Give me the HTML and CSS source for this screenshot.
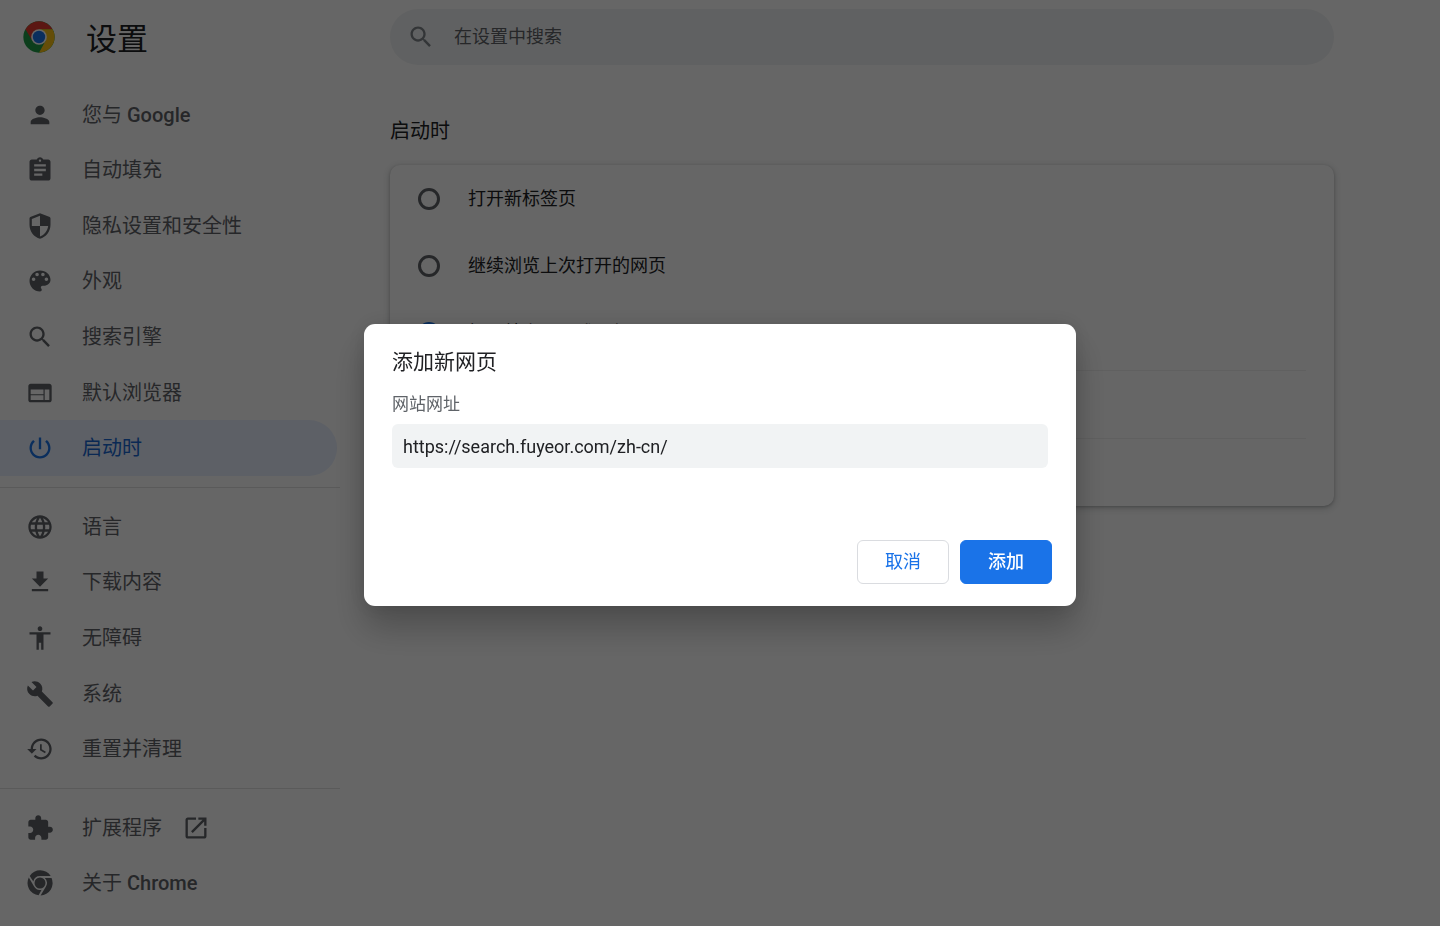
FILE: index.html
```html
<!DOCTYPE html>
<html lang="zh-CN">
<head>
<meta charset="utf-8">
<meta name="viewport" content="width=device-width, initial-scale=1">
<title>设置</title>
<link rel="stylesheet" href="styles.css">
</head>
<body>
<div class="page">
  <aside class="sidebar">
    <header class="brand">
      <svg class="brand-logo" viewBox="0 0 48 48" aria-hidden="true">
        <circle cx="24" cy="24" r="23.5" fill="#1e9b48"/>
        <path fill="#e33b2e" d="M3.65 12.25A23.5 23.5 0 0 1 44.35 12.25H24L14.04 29.75z"/>
        <path fill="#fbc116" d="M44.35 12.25A23.5 23.5 0 0 1 24 47.5L33.96 29.75 24 12.25z"/>
        <circle cx="24" cy="24" r="11.75" fill="#fff"/>
        <circle cx="24" cy="24" r="9.3" fill="#1a73e8"/>
      </svg>
      <h1 class="brand-title">设置</h1>
    </header>
    <nav class="menu">
      <div class="menu-group menu-group-primary">
        <a class="menu-item" href="#people"><svg class="icon" viewBox="0 0 24 24"><path d="M12 12c2.21 0 4-1.79 4-4s-1.79-4-4-4-4 1.79-4 4 1.79 4 4 4zm0 2c-2.67 0-8 1.34-8 4v2h16v-2c0-2.66-5.33-4-8-4z"/></svg><span>您与 <span class="latin">Google</span></span></a>
        <a class="menu-item" href="#autofill"><svg class="icon" viewBox="0 0 24 24"><path d="M19 3h-4.18C14.4 1.84 13.3 1 12 1c-1.3 0-2.4.84-2.82 2H5c-1.1 0-2 .9-2 2v14c0 1.1.9 2 2 2h14c1.1 0 2-.9 2-2V5c0-1.1-.9-2-2-2zm-7 0c.55 0 1 .45 1 1s-.45 1-1 1-1-.45-1-1 .45-1 1-1zm2 14H7v-2h7v2zm3-4H7v-2h10v2zm0-4H7V7h10v2z"/></svg><span>自动填充</span></a>
        <a class="menu-item" href="#privacy"><svg class="icon" viewBox="0 0 24 24"><path d="M12 1L4.2 4C3.4 4.3 3 4.8 3 5.6V11c0 5.55 3.84 10.74 9 12 5.16-1.26 9-6.45 9-12V5.6c0-.8-.4-1.3-1.2-1.6L12 1zm0 10.99h7c-.53 4.12-3.28 7.79-7 8.94V12H5V5.9l7-2.71v8.8z"/></svg><span>隐私设置和安全性</span></a>
        <a class="menu-item" href="#appearance"><svg class="icon" viewBox="0 0 24 24"><path d="M12 3c-4.97 0-9 4.03-9 9s4.03 9 9 9c.83 0 1.5-.67 1.5-1.5 0-.39-.15-.74-.39-1.01-.23-.26-.38-.61-.38-.99 0-.83.67-1.5 1.5-1.5H16c2.76 0 5-2.24 5-5 0-4.42-4.03-8-9-8zm-5.5 9c-.83 0-1.5-.67-1.5-1.5S5.67 9 6.5 9 8 9.67 8 10.5 7.33 12 6.5 12zm3-4C8.67 8 8 7.33 8 6.5S8.67 5 9.5 5s1.5.67 1.5 1.5S10.33 8 9.5 8zm5 0c-.83 0-1.5-.67-1.5-1.5S13.67 5 14.5 5s1.5.67 1.5 1.5S15.33 8 14.5 8zm3 4c-.83 0-1.5-.67-1.5-1.5S16.67 9 17.5 9s1.5.67 1.5 1.5-.67 1.5-1.5 1.5z"/></svg><span>外观</span></a>
        <a class="menu-item" href="#search"><svg class="icon" viewBox="0 0 24 24"><path d="M15.5 14h-.79l-.28-.27C15.41 12.59 16 11.11 16 9.5 16 5.91 13.09 3 9.5 3S3 5.91 3 9.5 5.91 16 9.5 16c1.61 0 3.09-.59 4.23-1.57l.27.28v.79l5 4.99L20.49 19l-4.99-5zm-6 0C7.01 14 5 11.99 5 9.5S7.01 5 9.5 5 14 7.01 14 9.5 11.99 14 9.5 14z"/></svg><span>搜索引擎</span></a>
        <a class="menu-item" href="#default-browser"><svg class="icon" viewBox="0 0 24 24"><path d="M20 4H4c-1.1 0-1.99.9-1.99 2L2 18c0 1.1.9 2 2 2h16c1.1 0 2-.9 2-2V6c0-1.1-.9-2-2-2zm-5 14H4v-4h11v4zm0-5H4V9h11v4zm5 5h-4V9h4v9z"/></svg><span>默认浏览器</span></a>
        <a class="menu-item menu-item-current" href="#on-startup" aria-current="page"><svg class="icon" viewBox="0 0 24 24"><path d="M13 3h-2v10h2V3zm4.83 2.17l-1.42 1.42C17.99 7.86 19 9.81 19 12c0 3.87-3.13 7-7 7s-7-3.13-7-7c0-2.19 1.01-4.14 2.58-5.42L6.17 5.17C4.23 6.82 3 9.26 3 12c0 4.97 4.03 9 9 9s9-4.03 9-9c0-2.74-1.23-5.18-3.17-6.83z"/></svg><span>启动时</span></a>
      </div>
      <hr class="menu-rule">
      <div class="menu-group menu-group-advanced">
        <a class="menu-item" href="#languages"><svg class="icon" viewBox="0 0 24 24"><path d="M11.99 2C6.47 2 2 6.48 2 12s4.47 10 9.99 10C17.52 22 22 17.52 22 12S17.52 2 11.99 2zm6.93 6h-2.95c-.32-1.25-.78-2.45-1.38-3.56 1.84.63 3.37 1.91 4.33 3.56zM12 4.04c.83 1.2 1.48 2.53 1.91 3.96h-3.82c.43-1.43 1.08-2.76 1.91-3.96zM4.26 14C4.1 13.36 4 12.69 4 12s.1-1.36.26-2h3.38c-.08.66-.14 1.32-.14 2s.06 1.34.14 2H4.26zm.82 2h2.95c.32 1.25.78 2.45 1.38 3.56-1.84-.63-3.37-1.9-4.33-3.56zm2.95-8H5.08c.96-1.66 2.49-2.93 4.33-3.56C8.81 5.55 8.35 6.75 8.03 8zM12 19.96c-.83-1.2-1.48-2.53-1.91-3.96h3.82c-.43 1.43-1.08 2.76-1.91 3.96zM14.34 14H9.66c-.09-.66-.16-1.32-.16-2s.07-1.35.16-2h4.68c.09.65.16 1.32.16 2s-.07 1.34-.16 2zm.25 5.56c.6-1.11 1.06-2.31 1.38-3.56h2.95c-.96 1.65-2.49 2.93-4.33 3.56zM16.36 14c.08-.66.14-1.32.14-2s-.06-1.34-.14-2h3.38c.16.64.26 1.31.26 2s-.1 1.36-.26 2h-3.38z"/></svg><span>语言</span></a>
        <a class="menu-item" href="#downloads"><svg class="icon" viewBox="0 0 24 24"><path d="M19 9h-4V3H9v6H5l7 7 7-7zM5 18v2h14v-2H5z"/></svg><span>下载内容</span></a>
        <a class="menu-item" href="#accessibility"><svg class="icon" viewBox="0 0 24 24"><path d="M12 2c1.1 0 2 .9 2 2s-.9 2-2 2-2-.9-2-2 .9-2 2-2zm9 7h-6v13h-2v-6h-2v6H9V9H3V7h18v2z"/></svg><span>无障碍</span></a>
        <a class="menu-item" href="#system"><svg class="icon" viewBox="0 0 24 24"><path d="M22.7 19l-9.1-9.1c.9-2.3.4-5-1.5-6.9-2-2-5-2.4-7.4-1.3L9 6 6 9 1.6 4.7C.4 7.1.9 10.1 2.9 12.1c1.9 1.9 4.6 2.4 6.9 1.5l9.1 9.1c.4.4 1 .4 1.4 0l2.3-2.3c.5-.4.5-1.1.1-1.4z"/></svg><span>系统</span></a>
        <a class="menu-item" href="#reset"><svg class="icon" viewBox="0 0 24 24"><path d="M13 3c-4.97 0-9 4.03-9 9H1l3.89 3.89.07.14L9 12H6c0-3.87 3.13-7 7-7s7 3.13 7 7-3.13 7-7 7c-1.93 0-3.68-.79-4.94-2.06l-1.42 1.42C8.27 19.99 10.51 21 13 21c4.97 0 9-4.03 9-9s-4.03-9-9-9zm-1 5v5l4.28 2.54.72-1.21-3.5-2.08V8H12z"/></svg><span>重置并清理</span></a>
      </div>
      <hr class="menu-rule">
      <div class="menu-group menu-group-about">
        <a class="menu-item" href="#extensions"><svg class="icon" viewBox="0 0 24 24"><path d="M20.5 11H19V7c0-1.1-.9-2-2-2h-4V3.5C13 2.12 11.88 1 10.5 1S8 2.12 8 3.5V5H4c-1.1 0-1.99.9-1.99 2v3.8H3.5c1.49 0 2.7 1.21 2.7 2.7s-1.21 2.7-2.7 2.7H2V20c0 1.1.9 2 2 2h3.8v-1.5c0-1.49 1.21-2.7 2.7-2.7 1.49 0 2.7 1.21 2.7 2.7V22H17c1.1 0 2-.9 2-2v-4h1.5c1.38 0 2.5-1.12 2.5-2.5S21.88 11 20.5 11z"/></svg><span>扩展程序</span><svg class="icon icon-external" viewBox="0 0 24 24"><path d="M19 19H5V5h7V3H5c-1.11 0-2 .9-2 2v14c0 1.1.89 2 2 2h14c1.1 0 2-.9 2-2v-7h-2v7zM14 3v2h3.59l-9.83 9.83 1.41 1.41L19 6.41V10h2V3h-7z"/></svg></a>
        <a class="menu-item" href="#about"><svg class="icon" viewBox="0 0 24 24"><circle cx="12" cy="12" r="4.7"/><path d="M12 6.1h9.2A10.7 10.7 0 0 0 3.2 5.9L6.3 10.8A5.9 5.9 0 0 1 12 6.1zM2.4 7.2A10.7 10.7 0 0 0 10.8 22.6L13.4 17.7A5.9 5.9 0 0 1 6.8 14.8zM21.9 7.7H16.1A5.9 5.9 0 0 1 17.1 14.9L12.5 22.7A10.7 10.7 0 0 0 21.9 7.7z"/></svg><span>关于 <span class="latin">Chrome</span></span></a>
      </div>
    </nav>
  </aside>

  <main class="content">
    <div class="search">
      <svg class="icon search-icon" viewBox="0 0 24 24" aria-hidden="true"><path d="M15.5 14h-.79l-.28-.27C15.41 12.59 16 11.11 16 9.5 16 5.91 13.09 3 9.5 3S3 5.91 3 9.5 5.91 16 9.5 16c1.61 0 3.09-.59 4.23-1.57l.27.28v.79l5 4.99L20.49 19l-4.99-5zm-6 0C7.01 14 5 11.99 5 9.5S7.01 5 9.5 5 14 7.01 14 9.5 11.99 14 9.5 14z"/></svg>
      <input class="search-input" type="search" placeholder="在设置中搜索" aria-label="在设置中搜索">
    </div>
    <h2 class="section-title">启动时</h2>
    <section class="card">
      <label class="option"><input class="radio" type="radio" name="startup"><span>打开新标签页</span></label>
      <label class="option"><input class="radio" type="radio" name="startup"><span>继续浏览上次打开的网页</span></label>
      <label class="option"><input class="radio" type="radio" name="startup" checked><span>打开特定网页或一组网页</span></label>
      <div class="card-rows">
        <div class="card-row"></div>
        <div class="card-row"></div>
      </div>
    </section>
  </main>
</div>

<div class="backdrop">
  <form class="dialog" role="dialog" aria-modal="true" aria-labelledby="dialog-title">
    <h2 class="dialog-title" id="dialog-title">添加新网页</h2>
    <label class="field-label" for="site-url">网站网址</label>
    <input class="field-input" id="site-url" type="text" value="https://search.fuyeor.com/zh-cn/" spellcheck="false">
    <div class="dialog-actions">
      <button class="button" type="button">取消</button>
      <button class="button button-primary" type="submit">添加</button>
    </div>
  </form>
</div>
</body>
</html>
```
FILE: styles.css
```css
* {
  box-sizing: border-box;
}

body {
  margin: 0;
  background: #fff;
  color: #202124;
  font-family: Roboto, "Noto Sans CJK SC", sans-serif;
  font-size: 18px;
  font-weight: 400;
  line-height: 24px;
}

h1,
h2 {
  margin: 0;
  font-weight: inherit;
}

input,
button {
  font: inherit;
}

.page {
  display: flex;
  min-height: 100vh;
}

.sidebar {
  flex: 0 0 340px;
}

.brand {
  display: flex;
  align-items: center;
  gap: 31px;
  height: 74px;
  padding-left: 23px;
}

.brand-logo {
  width: 32px;
  height: 32px;
}

.brand-title {
  padding-top: 6px;
  font-size: 31px;
  line-height: 40px;
}

.menu {
  padding-top: 13px;
}

.menu-group {
  display: grid;
  grid-auto-rows: 1fr;
  padding-right: 3px;
}

.menu-group-primary {
  min-height: 389px;
}

.menu-group-advanced {
  min-height: 278px;
}

.menu-group-about {
  min-height: 111px;
}

.menu-item {
  display: flex;
  align-items: center;
  gap: 28px;
  padding-left: 26px;
  border-radius: 0 28px 28px 0;
  color: #5f6368;
  font-size: 20px;
  text-decoration: none;
}

.menu-item-current {
  background: #e8f0fe;
  color: #1967d2;
}

.menu-item-current .icon {
  color: #1a73e8;
}

.menu-rule {
  height: 1px;
  margin: 11px 0;
  border: 0;
  background: rgba(0, 0, 0, .12);
}

.latin {
  font-weight: 500;
}

.icon {
  flex: none;
  width: 28px;
  height: 28px;
  fill: currentColor;
}

.icon-external {
  margin-left: -8px;
}

.content {
  flex: 1;
  padding: 9px 106px 0 50px;
}

.search {
  display: flex;
  align-items: center;
  height: 56px;
  padding: 0 28px 0 17px;
  gap: 19px;
  border-radius: 28px;
  background: #f1f3f4;
  color: #80868b;
}

.search-input {
  flex: 1;
  padding: 0;
  border: 0;
  outline: 0;
  background: none;
}

.search-input::placeholder {
  color: #5f6368;
  opacity: 1;
}

.section-title {
  padding: 54px 0 22px;
  font-size: 20px;
}

.card {
  border-radius: 10px;
  background: #fff;
  box-shadow: 0 1px 3px rgba(60, 64, 67, .3), 0 2px 6px 2px rgba(60, 64, 67, .15);
}

.option {
  display: flex;
  align-items: center;
  gap: 28px;
  height: 67px;
  padding: 0 28px;
}

.radio {
  appearance: none;
  width: 22px;
  height: 22px;
  margin: 0;
  border: 3px solid #5f6368;
  border-radius: 50%;
}

.radio:checked {
  padding: 3px;
  border-color: #1a73e8;
  background: #1a73e8 content-box;
}

.card-rows {
  padding: 4px 28px 0;
}

.card-row {
  height: 68px;
  border-top: 1px solid rgba(0, 0, 0, .06);
}

.backdrop {
  position: fixed;
  inset: 0;
  display: flex;
  align-items: flex-start;
  justify-content: center;
  padding-top: 35vh;
  background: rgba(0, 0, 0, .6);
}

.dialog {
  display: flex;
  flex-direction: column;
  width: 712px;
  max-width: 100%;
  padding: 24px 28px 22px;
  border-radius: 11px;
  background: #fff;
  box-shadow: 0 0 22px rgba(0, 0, 0, .12), 0 22px 34px rgba(0, 0, 0, .24);
}

.dialog-title {
  font-size: 21px;
  line-height: 28px;
}

.field-label {
  margin-top: 16px;
  color: #5f6368;
  font-size: 17px;
}

.field-input {
  height: 44px;
  margin-top: 8px;
  padding: 0 11px;
  border: 0;
  border-radius: 6px;
  outline: 0;
  background: #f1f3f4;
  color: #202124;
}

.dialog-actions {
  display: flex;
  justify-content: flex-end;
  gap: 11px;
  margin: 72px -4px 0 0;
}

.button {
  height: 44px;
  padding: 0 27px;
  border: 1px solid #dadce0;
  border-radius: 6px;
  background: #fff;
  color: #1a73e8;
}

.button-primary {
  border-color: #1a73e8;
  background: #1a73e8;
  color: #fff;
  font-weight: 500;
}
```
